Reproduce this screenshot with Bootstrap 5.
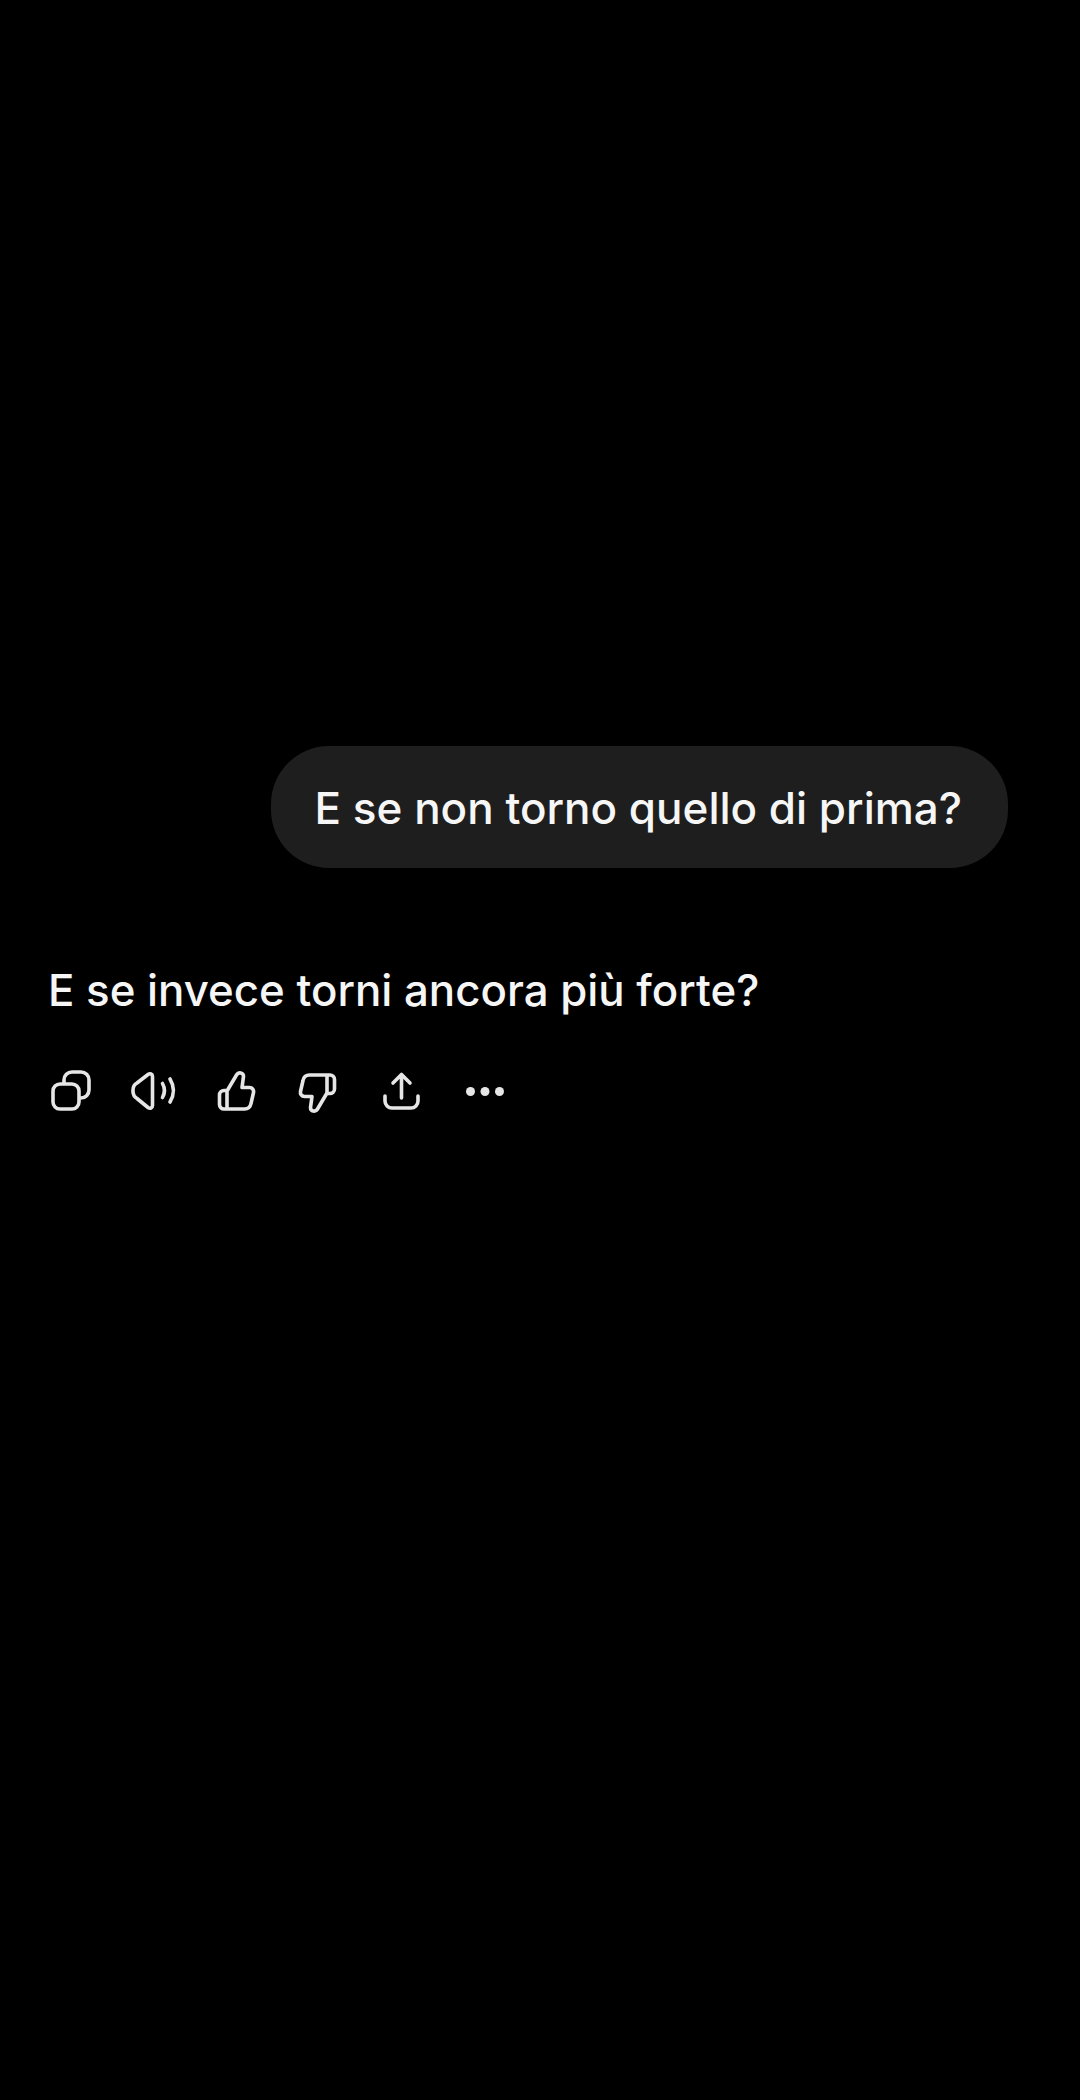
<!DOCTYPE html>
<html lang="it">
<head>
    <meta charset="UTF-8">
    <meta name="viewport" content="width=device-width, initial-scale=1.0">
    <title>Chat</title>
    <link href="https://cdn.jsdelivr.net/npm/bootstrap@5.3.0/dist/css/bootstrap.min.css" rel="stylesheet">
    <style>
        html, body { background: #000; }
        body { font-family: Inter, "Liberation Sans", sans-serif; color: #f6f6f6; height: 2100px; overflow: hidden; }
        .chat-area { padding: 746px 72px 0 48px; }
        .user-bubble { background: #1e1e1e; border-radius: 58px; height: 122px; padding: 3px 46px 0 44px; font-size: 44px; font-weight: 500; line-height: 119px; }
        .reply-text { font-size: 43.800px; font-weight: 500; line-height: 60px; margin-top: 93px; }
        .action-row { gap: 34.5px; margin-top: 47px; }
        .action-row svg { width: 48px; height: 48px; fill: none; stroke: #e6e6e6; stroke-width: 3.6; stroke-linecap: round; stroke-linejoin: round; }
        .action-row .dots { fill: #e6e6e6; stroke: none; }
    </style>
</head>
<body>
    <div class="chat-area">
        <div class="d-flex justify-content-end">
            <div class="user-bubble text-nowrap">E se non torno quello di prima?</div>
        </div>

        <p class="reply-text mb-0">E se invece torni ancora più forte?</p>

        <div class="action-row d-flex align-items-center">
            <!-- copia -->
            <svg viewBox="0 0 48 48"><rect x="5" y="16" width="26" height="25" rx="7"/><path d="M16 15v-3a8 8 0 0 1 8-8h9a8 8 0 0 1 8 8v10a8 8 0 0 1-8 8"/></svg>
            <!-- audio -->
            <svg viewBox="0 0 48 48"><g transform="translate(-2 0)"><path d="M19 6.500 8 15a8 8 0 0 0-4 7v2a8 8 0 0 0 4 6.500l11 9c2 1.500 4.500.5 4.500-2V8.500c0-2.500-2.500-3.500-4.500-2Z"/><path d="M33.500 15.500c2.500 4.500 2.500 9.500 0 14"/><path d="M41 11c4.500 7.500 4.500 15.500 0 23"/></g></svg>
            <!-- mi piace -->
            <svg viewBox="0 0 48 48"><g transform="translate(-1 0)"><path d="M15 41V23l9.500-16c2-3.500 7-2.500 7 1.500L30 19.500h7.500c3 0 4.500 2.500 4 5l-2.500 11c-.7 3.500-3 5.500-6.500 5.500H12a4.500 4.500 0 0 1-4.500-4.500V27a4.500 4.500 0 0 1 4.500-4.500h3.500"/></g></svg>
            <!-- non mi piace -->
            <svg viewBox="0 0 48 48"><g transform="rotate(180 23 24)"><path d="M15 41V23l9.500-16c2-3.500 7-2.500 7 1.500L30 19.500h7.500c3 0 4.500 2.500 4 5l-2.500 11c-.7 3.500-3 5.500-6.500 5.500H12a4.500 4.500 0 0 1-4.500-4.500V27a4.500 4.500 0 0 1 4.500-4.500h3.500"/></g></svg>
            <!-- condividi -->
            <svg viewBox="0 0 48 48"><g transform="translate(-1 0)"><path d="M24.500 30V7M16 15l8.500-8.500L33 15"/><path d="M8 28v5a7 7 0 0 0 7 7h19a7 7 0 0 0 7-7v-5"/></g></svg>
            <!-- altro -->
            <svg viewBox="0 0 48 48"><g class="dots"><circle cx="9.500" cy="23.500" r="4.500"/><circle cx="24" cy="23.500" r="4.500"/><circle cx="38.500" cy="23.500" r="4.500"/></g></svg>
        </div>
    </div>

    <script src="https://cdn.jsdelivr.net/npm/bootstrap@5.3.0/dist/js/bootstrap.bundle.min.js"></script>
</body>
</html>
